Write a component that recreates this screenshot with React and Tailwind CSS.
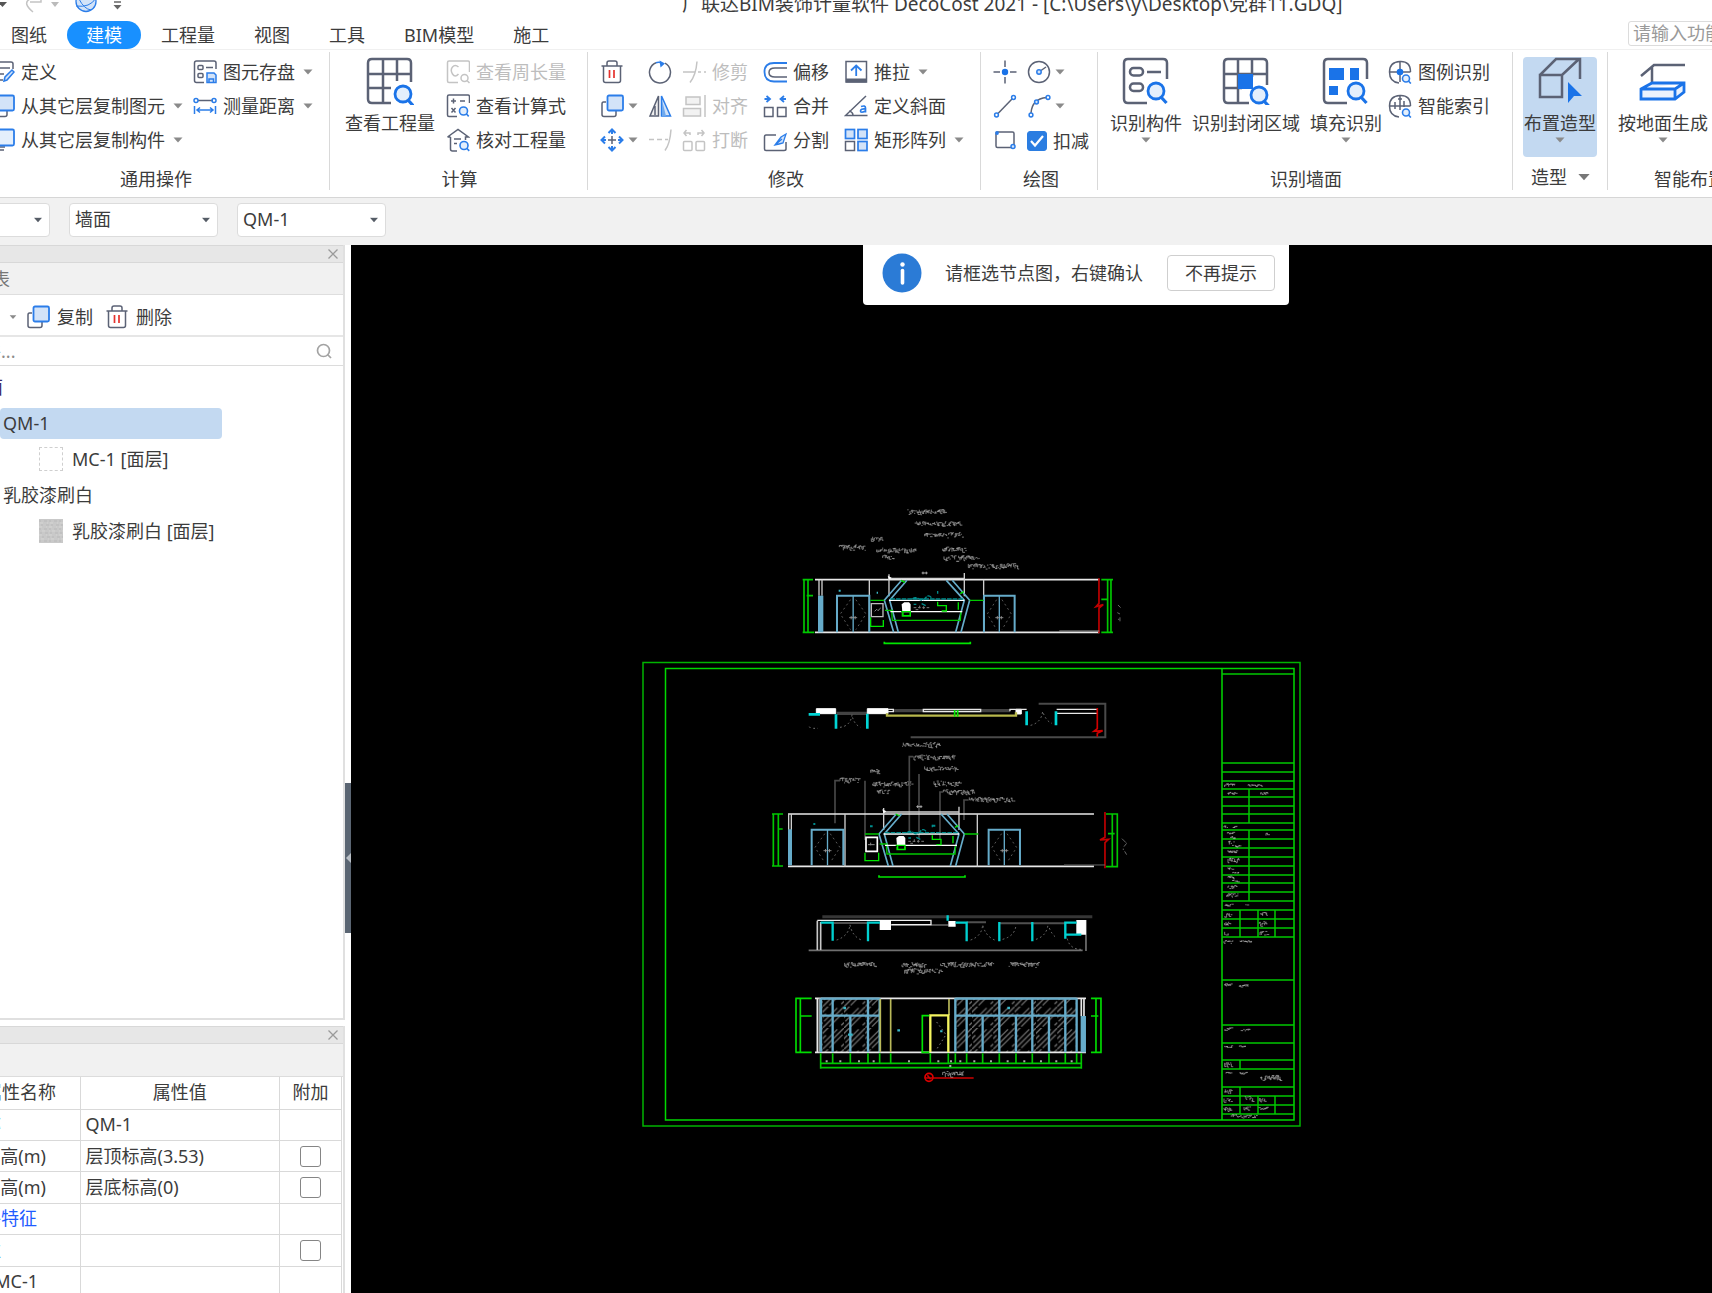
import React from "react";

const DARK = "#5b6275";
const BLUE = "#2b7de9";
const PALE = "#d3e3f8";
const GREY = "#c4c4c4";

function Caret({ className = "text-[#8a8a8a]" }) {
  return (
    <svg viewBox="0 0 10 6" className={`h-[6px] w-[10px] shrink-0 ${className}`} aria-hidden="true">
      <path d="M0.5 0.5H9.5L5 5.5Z" fill="currentColor" />
    </svg>
  );
}

function Icon({ children }) {
  return (
    <svg viewBox="0 0 24 24" className="size-6 shrink-0" fill="none" stroke={DARK} strokeWidth="1.5" aria-hidden="true">
      {children}
    </svg>
  );
}

function BigIcon({ children }) {
  return (
    <svg viewBox="0 0 48 48" className="size-12 shrink-0" fill="none" stroke={DARK} strokeWidth="2.5" aria-hidden="true">
      {children}
    </svg>
  );
}

function Lens({ x, y, r = 4 }) {
  return (
    <g stroke={BLUE} strokeWidth="1.6">
      <circle cx={x} cy={y} r={r} fill="#e4effc" />
      <path d={`M${x + r * 0.7} ${y + r * 0.7}l2.4 2.6`} />
    </g>
  );
}

function BigLens({ x, y }) {
  return (
    <g stroke="#1a73e8" strokeWidth="2.8">
      <circle cx={x} cy={y} r="8" fill="#e4effc" />
      <path d={`M${x + 5} ${y + 6}l5.5 6`} strokeWidth="3.2" />
    </g>
  );
}

const icons = {
  define: (
    <Icon>
      <path d="M2 2H20Q22 2 22 4V9M2 8H19M2 14H13M2 20H12" />
      <path d="M13 21l1-4 7-7 2 2-7 8z" stroke={BLUE} fill={PALE} />
    </Icon>
  ),
  copy: (
    <Icon>
      <path d="M6 8H3.5Q2 8 2 10V20.5Q2 22.500 4 22.500H14Q16 22.500 16 20.500V17" />
      <rect x="7.500" y="1.500" width="15.500" height="15" rx="1.500" stroke={BLUE} fill={PALE} strokeWidth="1.800" />
    </Icon>
  ),
  copyPart: (
    <Icon>
      <path d="M3 19V20M3 22H13M5 19H14" />
      <rect x="7.500" y="1.500" width="15.500" height="16" rx="1.500" stroke={BLUE} fill="#e4effc" strokeWidth="1.800" />
    </Icon>
  ),
  save: (
    <Icon>
      <path d="M11 22.500H3.500Q1.500 22.500 1.500 20.500V3Q1.500 1 3.500 1H21Q23 1 23 3V9" />
      <rect x="5" y="5.500" width="5" height="4" rx="1" />
      <rect x="5" y="13.500" width="5" height="4" rx="1" />
      <path d="M13 7.500H20" />
      <path d="M14 13H21L23 15V22.500H14ZM16 22V19H20.500V22" stroke={BLUE} fill={PALE} />
    </Icon>
  ),
  measure: (
    <Icon>
      <path d="M5 6.500H20" />
      <g stroke={BLUE}>
        <circle cx="3" cy="6.500" r="2" />
        <circle cx="21" cy="6.500" r="2" />
        <path d="M1.500 12V20M22.500 12V20M4 16H20M7 13.500L4 16L7 18.500M17 13.500L20 16L17 18.500" />
      </g>
    </Icon>
  ),
  perimeter: (
    <Icon>
      <g stroke={GREY}>
        <path d="M12 22.500H3Q1.500 22.500 1.500 21V2.500Q1.500 1 3 1H22Q23.500 1 23.500 3V12" />
        <path d="M12.500 7Q9 4 6.500 7T6.500 14T12.500 14" />
        <circle cx="18.500" cy="18" r="3.500" />
        <path d="M21 20.500L23.500 23" />
      </g>
    </Icon>
  ),
  formula: (
    <Icon>
      <path d="M11 22.500H3Q1.500 22.500 1.500 21V2.500Q1.500 1 3 1H22Q23.500 1 23.500 3V9" />
      <path d="M5 7H10M7.500 4.500V9.500M14 7H19M5.500 14L9.500 18.500M9.500 14L5.500 18.500" />
      <Lens x={17.5} y={17} />
    </Icon>
  ),
  verify: (
    <Icon>
      <path d="M1.500 9L12 1.500L22.500 9H19.500V12M4.500 9V21Q4.500 23 6.500 23H11M1.500 9H4.500M8 11H15M8 15.500H11" />
      <Lens x={18} y={17.5} />
    </Icon>
  ),
  trash: (
    <Icon>
      <path d="M1.500 6H22.500M7 5.500V3Q7 1 9 1H15Q17 1 17 3V5.500M3.500 6V20.500Q3.500 22.500 5.500 22.500H18.500Q20.500 22.500 20.500 20.500V6" />
      <path d="M9.500 10V18M14 10V18" stroke="#e5322d" strokeWidth="1.700" />
    </Icon>
  ),
  move: (
    <Icon>
      <path d="M8 12H16M12 8V16" />
      <path d="M8.500 5L12 1.500L15.500 5M8.500 19L12 22.500L15.500 19M5 8.500L1.500 12L5 15.500M19 8.500L22.500 12L19 15.500M12 2V6M12 18V22M2 12H6M18 12H22" stroke={BLUE} strokeWidth="2" />
    </Icon>
  ),
  rotate: (
    <Icon>
      <path d="M17 3.200A10.500 10.500 0 1 1 8 2.700" />
      <path d="M11.500 0.500L17 3.500L12.500 7.500Z" fill={BLUE} stroke="none" />
      <path d="M8 2.700Q10 2 12 2.500" stroke={BLUE} />
    </Icon>
  ),
  mirror: (
    <Icon>
      <path d="M10.500 2V22H2ZM7 12V21" fill="#f0f0f0" />
      <path d="M13.500 2V22H22.500Z" stroke={BLUE} fill={PALE} />
      <path d="M14 6V22H18Z" fill="#6fa9ee" stroke="none" />
    </Icon>
  ),
  extend: (
    <Icon>
      <path d="M1 11.500H6M9 11.500H14M17 11.500H20M23 1.500Q22 16 17 22.500" stroke={GREY} />
    </Icon>
  ),
  trim: (
    <Icon>
      <path d="M1 12H13M16 12H19M22 12H24M15 1.500Q14 15 8 22.500" stroke={GREY} />
    </Icon>
  ),
  align: (
    <Icon>
      <g stroke={GREY} fill="#f2f2f2">
        <rect x="4" y="3" width="14" height="7.500" />
        <rect x="1.500" y="14.500" width="17" height="7.500" />
        <path d="M23 1V23" />
      </g>
    </Icon>
  ),
  breakUp: (
    <Icon>
      <g stroke={GREY}>
        <rect x="1.500" y="13.500" width="8.500" height="9" rx="1" />
        <rect x="14" y="13.500" width="8.500" height="9" rx="1" />
        <path d="M8 7V5H2M4.500 2L2 5L4.500 8M16 7V5H22M19.500 2L22 5L19.500 8" />
      </g>
    </Icon>
  ),
  offset: (
    <Icon>
      <path d="M24 3H11Q1.500 3 1.500 12T11 21.500H24" stroke={BLUE} strokeWidth="1.800" />
      <path d="M24 8H12Q6 8 6 12.500T12 17H24" />
    </Icon>
  ),
  merge: (
    <Icon>
      <rect x="1.500" y="13.500" width="8.500" height="9" />
      <rect x="14.500" y="13.500" width="8.500" height="9" />
      <path d="M1.500 5H6M23 5H18.500M3.500 2L7 5L3.500 8M21 2L17.500 5L21 8" stroke={BLUE} strokeWidth="1.800" />
    </Icon>
  ),
  split: (
    <Icon>
      <path d="M13 7H3Q1.500 7 1.500 9V21Q1.500 22.500 3 22.500H21Q23 22.500 23 21V14" />
      <path d="M12 17L18 9L23 6L20 15L16 16ZM12 17L19 11" stroke={BLUE} fill={PALE} strokeWidth="1.300" />
    </Icon>
  ),
  push: (
    <Icon>
      <path d="M2 1.500H22.500V22H2Z" />
      <path d="M2 20.500H22.500" strokeWidth="4" />
      <path d="M12.200 16V5.500M7 10.500L12.200 5.500L17.500 10.500" stroke={BLUE} strokeWidth="1.800" />
    </Icon>
  ),
  slope: (
    <Icon>
      <path d="M22 2L1.500 21.500H23.500M5 17Q9 18 9 21.500" />
      <path d="M17 12.500Q21.500 11 21.500 14V18.500M21.500 15Q16.500 14.500 16.500 17T21.500 17" stroke={BLUE} strokeWidth="1.700" />
    </Icon>
  ),
  array: (
    <Icon>
      <g stroke={BLUE} fill={PALE} strokeWidth="1.700">
        <rect x="1.500" y="1.500" width="9" height="9" />
        <rect x="14" y="1.500" width="9" height="9" />
        <rect x="14" y="13.500" width="9" height="9" />
      </g>
      <rect x="1.500" y="13.500" width="9" height="9" />
    </Icon>
  ),
  point: (
    <Icon>
      <path d="M12 0.500V7M12 17V23.500M0.500 12H7M17 12H23.500" />
      <circle cx="12" cy="12" r="3.200" fill="#1a73e8" stroke="none" />
    </Icon>
  ),
  circle: (
    <Icon>
      <circle cx="12" cy="12" r="10.500" />
      <path d="M14 10.500L19 7" />
      <circle cx="12" cy="12" r="2.200" stroke={BLUE} fill={PALE} />
    </Icon>
  ),
  line: (
    <Icon>
      <path d="M5 19.500L19 5" />
      <circle cx="3.500" cy="21" r="1.900" stroke={BLUE} />
      <circle cx="20.500" cy="3.500" r="1.900" stroke={BLUE} />
    </Icon>
  ),
  arc: (
    <Icon>
      <path d="M4 19Q5 5 19.500 3.500" />
      <g stroke={BLUE} fill="#ffffff">
        <circle cx="4" cy="21" r="1.900" />
        <circle cx="9.500" cy="8" r="1.900" fill={PALE} />
        <circle cx="21" cy="3.500" r="1.900" />
      </g>
    </Icon>
  ),
  rect: (
    <Icon>
      <rect x="3" y="4" width="18" height="15.500" rx="1.500" />
      <circle cx="4" cy="5" r="1.900" fill={BLUE} stroke="none" />
      <circle cx="20" cy="18.500" r="2" stroke={BLUE} fill={PALE} />
    </Icon>
  ),
  legend: (
    <Icon>
      <path d="M11 23Q1.500 22 1.500 12T12 1.500T22.500 12M12 1.500V22M1.500 12H22.500" />
      <circle cx="12" cy="12" r="3.300" fill="#1a73e8" stroke="none" />
      <Lens x={18} y={18.5} r={3.5} />
    </Icon>
  ),
  smart: (
    <Icon>
      <path d="M11 23Q1.500 22 1.500 12T12 1.500T22.500 12M12 1.500V16M1.500 12H22.500M7 8V15M16 7V13M10 5H14" />
      <Lens x={18} y={18.5} r={3.5} />
    </Icon>
  ),
};

const bigIcons = {
  quantity: (
    <BigIcon>
      <path d="M25 46H6Q2 46 2 42V6Q2 2 6 2H41Q45 2 45 6V25M2 17H45M2 31H25M17 2V46M31 2V24" />
      <BigLens x={37} y={37} />
    </BigIcon>
  ),
  component: (
    <BigIcon>
      <path d="M25 46H6Q2 46 2 42V6Q2 2 6 2H41Q45 2 45 6V22M25 15H39" />
      <rect x="8" y="11" width="13" height="7.500" rx="3.500" />
      <rect x="8" y="26.500" width="13" height="7.500" rx="3.500" />
      <BigLens x={34} y={34} />
    </BigIcon>
  ),
  closed: (
    <BigIcon>
      <path d="M27 46H6Q2 46 2 42V6Q2 2 6 2H41Q45 2 45 6V28M2 17H45M2 31H20M16 2V46M30 2V20" />
      <path d="M16 17H31V32H16Z" fill="#1a73e8" stroke="none" />
      <BigLens x={37} y={38} />
    </BigIcon>
  ),
  fill: (
    <BigIcon>
      <path d="M25 46H6Q2 46 2 42V6Q2 2 6 2H41Q45 2 45 6V22" />
      <path d="M7 11H22V23H7ZM28 11H37V23H28ZM7 29H16V38H7Z" fill="#1a73e8" stroke="none" />
      <BigLens x={34} y={34} />
    </BigIcon>
  ),
  shape: (
    <BigIcon>
      <path d="M4 18H26V40H4ZM4 18L20 2H44V22M26 18L43 2" />
      <path d="M32 25L46 39H38L32 46Z" fill="#1a73e8" stroke="none" />
    </BigIcon>
  ),
  floor: (
    <BigIcon>
      <path d="M46 8H15L2 19M13 9V27" />
      <path d="M2 32L13 26H45V35L36 42H2ZM2 32H36L45 26M36 32V42" stroke="#1a73e8" fill="#eaf2fd" strokeWidth="2.800" />
    </BigIcon>
  ),
};

function Tool({ icon, label, name, caret, disabled }) {
  return (
    <button
      type="button"
      aria-label={label ? undefined : name}
      disabled={disabled}
      className="flex h-[34px] items-center whitespace-nowrap disabled:text-[#bdbdbd]"
    >
      {icons[icon]}
      {label && <span className="ml-1.5">{label}</span>}
      {caret && <span className={label ? "ml-2" : "ml-1"}><Caret /></span>}
    </button>
  );
}

function BigTool({ icon, label, caret, active }) {
  return (
    <button
      type="button"
      className={`mt-[7px] flex h-[100px] flex-col items-center whitespace-nowrap rounded ${active ? "bg-[#c3d9f1] px-px" : ""}`}
    >
      {bigIcons[icon]}
      <span className="mt-[6px] leading-6">{label}</span>
      {caret && <span className="mt-0.5 flex"><Caret /></span>}
    </button>
  );
}

function Col({ children, className = "" }) {
  return <div className={`flex flex-col items-start pt-[5px] ${className}`}>{children}</div>;
}

function Group({ title, titleClass = "pl-2", caret, children, className = "" }) {
  return (
    <section className="flex shrink-0">
      <div className={`flex flex-col ${className}`}>
        <div className="flex h-[117px] items-start">{children}</div>
        <h2 className={`flex items-center justify-center gap-3 whitespace-nowrap leading-6 ${titleClass}`}>
          {title}
          {caret && <Caret className="scale-125 text-[#777]" />}
        </h2>
      </div>
      <div className="mt-0.5 h-[138px] w-px bg-[#d9d9d9]" />
    </section>
  );
}

function Ribbon() {
  return (
    <div className="flex h-[148px] shrink-0 overflow-hidden border-b border-[#d6d6d6] bg-white">
      <Group title="通用操作" className="-ml-[21px] pr-4 pl-3">
        <Col>
          <Tool icon="define" label="定义" />
          <Tool icon="copy" label="从其它层复制图元" caret />
          <Tool icon="copyPart" label="从其它层复制构件" caret />
        </Col>
        <Col className="ml-[10px]">
          <Tool icon="save" label="图元存盘" caret />
          <Tool icon="measure" label="测量距离" caret />
        </Col>
      </Group>
      <Group title="计算" className="pr-[21px] pl-[15px]">
        <BigTool icon="quantity" label="查看工程量" />
        <Col className="ml-[11px]">
          <Tool icon="perimeter" label="查看周长量" disabled />
          <Tool icon="formula" label="查看计算式" />
          <Tool icon="verify" label="核对工程量" />
        </Col>
      </Group>
      <Group title="修改" className="pr-4 pl-3">
        <Col>
          <Tool icon="trash" name="删除" />
          <Tool icon="copy" name="复制" caret />
          <Tool icon="move" name="移动" caret />
        </Col>
        <Col className="ml-[10px]">
          <Tool icon="rotate" name="旋转" />
          <Tool icon="mirror" name="镜像" />
          <Tool icon="extend" name="延伸" disabled />
        </Col>
        <Col className="ml-[10px]">
          <Tool icon="trim" label="修剪" disabled />
          <Tool icon="align" label="对齐" disabled />
          <Tool icon="breakUp" label="打断" disabled />
        </Col>
        <Col className="ml-[15px]">
          <Tool icon="offset" label="偏移" />
          <Tool icon="merge" label="合并" />
          <Tool icon="split" label="分割" />
        </Col>
        <Col className="ml-[15px]">
          <Tool icon="push" label="推拉" caret />
          <Tool icon="slope" label="定义斜面" />
          <Tool icon="array" label="矩形阵列" caret />
        </Col>
      </Group>
      <Group title="绘图" titleClass="pl-0" className="pr-2 pl-3">
        <Col>
          <Tool icon="point" name="点" />
          <Tool icon="line" name="直线" />
          <Tool icon="rect" name="矩形" />
        </Col>
        <Col className="ml-[10px]">
          <Tool icon="circle" name="圆" caret />
          <Tool icon="arc" name="弧" caret />
          <label className="flex h-[34px] items-center gap-1.5 pt-0.5">
            <span className="relative flex size-5">
              <input type="checkbox" defaultChecked className="peer size-5 appearance-none rounded-[3px] border border-[#999] checked:border-[#2b7de1] checked:bg-[#2b7de1]" />
              <svg viewBox="0 0 20 20" className="pointer-events-none absolute inset-0 hidden size-5 peer-checked:block" fill="none" stroke="#fff" strokeWidth="2.200" aria-hidden="true">
                <path d="M4 10L8 14.500L16 5" />
              </svg>
            </span>
            扣减
          </label>
        </Col>
      </Group>
      <Group title="识别墙面" titleClass="pl-3" className="pr-[22px] pl-3">
        <BigTool icon="component" label="识别构件" caret />
        <span className="ml-[10px]"><BigTool icon="closed" label="识别封闭区域" /></span>
        <span className="ml-[10px]"><BigTool icon="fill" label="填充识别" caret /></span>
        <Col className="ml-1.5">
          <Tool icon="legend" label="图例识别" />
          <Tool icon="smart" label="智能索引" />
        </Col>
      </Group>
      <Group title="造型" caret titleClass="-mt-0.5" className="pr-[10px] pl-[10px]">
        <BigTool icon="shape" label="布置造型" caret active />
      </Group>
      <Group title="智能布置" className="pr-12 pl-[10px]" titleClass="pl-9">
        <BigTool icon="floor" label="按地面生成" caret />
      </Group>
    </div>
  );
}

function Combo({ label, value }) {
  return (
    <div className="relative shrink-0">
      <select
        aria-label={label}
        defaultValue={value}
        className="h-[34px] w-[149px] appearance-none rounded border border-[#dcdcdc] bg-white pl-[5px] text-[18px]"
      >
        <option>{value}</option>
      </select>
      <span className="pointer-events-none absolute top-[14px] right-[7px] flex"><Caret className="text-[#555c66] scale-90" /></span>
    </div>
  );
}

function PanelBar() {
  return (
    <div className="flex h-[18px] items-center justify-end border-y border-[#d8d8d8] bg-[#e7e7e7] pr-[5px]">
      <button type="button" aria-label="关闭" className="flex">
        <svg viewBox="0 0 10 10" className="size-[10px]" stroke="#9a9a9a" strokeWidth="1.300" aria-hidden="true">
          <path d="M0.500 0.500L9.500 9.500M9.500 0.500L0.500 9.500" />
        </svg>
      </button>
    </div>
  );
}

function ComponentPanel() {
  return (
    <section className="flex h-[775px] shrink-0 flex-col border-r-2 border-b-2 border-[#e0e0e0] bg-white">
      <PanelBar />
      <div className="h-8 border-b border-[#dedede] bg-[#f1f1f1]">
        <h2 className="-ml-[62px] leading-8 text-[#777]">构件列表</h2>
      </div>
      <div className="flex h-[42px] items-center border-b-2 border-[#e6e6e6] pt-1">
        <span className="ml-2 flex"><Caret className="scale-75 text-[#8a8a8a]" /></span>
        <button type="button" className="ml-2 flex items-center gap-[7px]">{icons.copy}复制</button>
        <button type="button" className="ml-3 flex items-center gap-[7px]">{icons.trash}删除</button>
      </div>
      <div className="flex h-[29px] items-center justify-between border-b border-[#dcdcdc] pr-[11px]">
        <input aria-label="搜索构件" placeholder="搜索构件..." className="-ml-[71px] w-[200px] bg-transparent outline-none placeholder:text-[#8c8c8c]" />
        <svg viewBox="0 0 16 16" className="size-4" fill="none" stroke="#a3a3a3" strokeWidth="1.700" aria-hidden="true">
          <circle cx="7.500" cy="7.500" r="6" />
          <path d="M11.500 11.500L15 15" />
        </svg>
      </div>
      <ul className="flex-1 overflow-hidden pt-[3px]">
        <li className="-ml-[33px] h-9 leading-9 text-[#3b2a66]">墙面</li>
        <li className="flex h-9 items-center">
          <span className="h-[31px] w-[222px] rounded bg-[#c3d9f1] pl-[3px] leading-[31px]">QM-1</span>
        </li>
        <li className="flex h-9 items-center gap-[9px] pl-[39px]">
          <span className="size-6 border border-dashed border-[#cfcfcf]" />
          MC-1 [面层]
        </li>
        <li className="h-9 pl-[3px] leading-9">乳胶漆刷白</li>
        <li className="flex h-9 items-center gap-[9px] pl-[39px]">
          <svg viewBox="0 0 24 24" className="size-6" aria-hidden="true">
            <path d="M0 0H24V24H0Z" fill="#c9c9c9" />
            <g stroke="#b9b9b9" strokeDasharray="2 3 3 2">
              <path d="M0 2H24M2 6H24M0 10H24M1 14H24M3 18H24M0 22H24" />
            </g>
            <g stroke="#d6d6d4" strokeDasharray="3 4 1 2">
              <path d="M1 4H24M0 8H24M3 12H24M0 16H24M2 20H24" />
            </g>
          </svg>
          乳胶漆刷白 [面层]
        </li>
      </ul>
    </section>
  );
}

const props = [
  { name: "名称", pad: "pr-[79px]", tone: "text-[#4aa3ef]", value: "QM-1" },
  { name: "起点顶标高(m)", pad: "pr-[34px]", value: "层顶标高(3.53)", check: true },
  { name: "起点底标高(m)", pad: "pr-[34px]", value: "层底标高(0)", check: true },
  { name: "构件特征", pad: "pr-[43px]", tone: "text-[#1f5cff]", value: "" },
  { name: "备注", pad: "pr-[79px]", tone: "text-[#4aa3ef]", value: "", check: true },
  { name: "MC-1", pad: "pr-[42px]", value: "" },
];

function NameCell({ children, pad, tone = "" }) {
  return (
    <div className={`flex w-[80px] justify-end overflow-hidden ${pad} ${tone}`}>
      <span className="whitespace-nowrap">{children}</span>
    </div>
  );
}

function PropertyPanel() {
  return (
    <section className="mt-[6px] flex shrink-0 flex-col border-r-2 border-[#e0e0e0] bg-white">
      <PanelBar />
      <div className="h-[33px] border-b border-[#dcdcdc] bg-[#f1f1f1]" />
      <table className="mr-px h-[221px] w-[342px] table-fixed border-collapse">
        <colgroup>
          <col className="w-[80px]" />
          <col />
          <col className="w-[62px]" />
        </colgroup>
        <thead>
          <tr className="h-8 border-b border-[#d9d9d9]">
            <th className="border-r border-[#d9d9d9] p-0 font-normal"><NameCell pad="pr-[24px]">属性名称</NameCell></th>
            <th className="border-r border-[#d9d9d9] p-0 font-normal">属性值</th>
            <th className="border-r border-[#d9d9d9] p-0 font-normal">附加</th>
          </tr>
        </thead>
        <tbody>
          {props.map((p) => (
            <tr key={p.name} className="h-[31px] border-b border-[#d9d9d9]">
              <td className="border-r border-[#d9d9d9] p-0"><NameCell pad={p.pad} tone={p.tone}>{p.name}</NameCell></td>
              <td className="border-r border-[#d9d9d9] p-0 pl-[5px]">{p.value}</td>
              <td className="border-r border-[#d9d9d9] p-0">
                {p.check && (
                  <input type="checkbox" aria-label={p.name} className="mx-auto block size-[21px] appearance-none rounded-[3px] border border-[#858585] bg-white" />
                )}
              </td>
            </tr>
          ))}
        </tbody>
      </table>
    </section>
  );
}

const G = "#00c800";
const S = "#66acca";

/* Drafting notes: at this zoom each one is a row of tiny pen marks. */
function Note({ x, y, w, h = 16 }) {
  let d = "";
  let seed = (x * 733 + y * 197 + w) % 233280;
  const next = () => {
    seed = (seed * 9301 + 49297) % 233280;
    return seed / 233280;
  };
  for (let i = 0; i < w; i += 4) {
    const a = y - h / 2 + next() * h * 0.4;
    const b = a + h * (0.3 + next() * 0.4);
    if (next() > 0.35) d += `M${x + i} ${a}V${b}`;
    d += `M${x + i} ${next() > 0.5 ? a : b}h${3 + next() * 5}`;
  }
  return <path d={d} stroke="#b8b8b8" strokeWidth="2" />;
}

function Notes({ list }) {
  return list.map(([x, y, w, h]) => <Note key={`${x}-${y}`} x={x} y={y} w={w} h={h} />);
}

function Door({ x, w, y, b }) {
  const m = x + w / 2;
  return (
    <g>
      <path d={`M${x} ${b}V${y}H${x + w}V${b}`} stroke={S} strokeWidth="6" />
      <path d={`M${m} ${y}V${b}`} stroke={S} strokeWidth="4" />
      <path
        d={`M${m - 8} ${y + 12}L${x + 10} ${(y + b) / 2}L${m - 8} ${b - 8}M${m + 8} ${y + 12}L${x + w - 10} ${(y + b) / 2}L${m + 8} ${b - 8}`}
        stroke="#6a6a6a" strokeWidth="2.500" strokeDasharray="6 9"
      />
      <path d={`M${m - 12} ${b - 44}h24M${m - 6} ${b - 49}v10M${m + 6} ${b - 49}v10`} stroke="#9a9a9a" strokeWidth="2.500" />
    </g>
  );
}

/* Reception wall between the two slanted columns; x, y is the ceiling's left end. */
function Reception({ x, y }) {
  return (
    <g transform={`translate(${x} ${y})`}>
      <path d="M0 -16V50M226 -20V50M0 -4H226" stroke="#cfcfcf" strokeWidth="4" />
      <path d="M-4 -12L8 -6L0 0" fill="#fff" stroke="none" />
      <path d="M38 2L-14 62L14 158M54 2L2 62L28 158M172 2L226 62L200 158M190 2L242 62L216 158" stroke={S} strokeWidth="5" />
      <path d="M-56 62H-14M242 62H284M8 95L10 122H214L216 95M40 100V109H64V100M-12 92H12" stroke={G} strokeWidth="4" />
      <path d="M0 62H226M4 96H220" stroke="#fff" strokeWidth="4" />
      <path d="M4 58H222M70 58q10-8 20 0t20-4t20 4M146 34v8M74 74h8M98 72l12 6" stroke="#008c8c" strokeWidth="4" strokeDasharray="14 3" />
      <path d="M38 74L46 68H60L65 74V96H40Z" fill="#fff" stroke="none" />
      <path d="M36 96H66M42 96V108H64V96M146 66V78H172V94M158 94H174M208 68V90M214 42L224 36M36 2L48 8" stroke="#00e600" strokeWidth="4" />
      <path d="M74 84h50M80 90h12M92 78v12M104 80v10" stroke="#7a7a7a" strokeWidth="3" strokeDasharray="8 5" />
      <path d="M98 -20h18M102 -24v8M112 -24v8" stroke="#aaa" strokeWidth="3" />
      <path d="M-14 186V191H244V186" stroke="#00e600" strokeWidth="5" />
    </g>
  );
}

function ElevationUpper() {
  return (
    <g transform="translate(780 490) scale(0.3333)">
      <Notes list={[[382, 66, 116], [404, 102, 138], [434, 135, 114], [274, 147, 36], [178, 173, 78], [290, 182, 118], [308, 203, 34], [488, 179, 70], [492, 205, 106], [565, 229, 152]]} />
      <path d="M72 427V269M84 269V427M68 269H99M80 317H99M68 427H103" stroke={G} strokeWidth="5" />
      <path d="M964 269H999M964 328H984M964 427H999M983 269V427M993 269V427" stroke={G} strokeWidth="5" />
      <path d="M105 269H958M105 427H958" stroke="#e8e8e8" strokeWidth="5" />
      <path d="M117 269V317M126 269V317M268 269V427M611 269V427" stroke="#cfcfcf" strokeWidth="4" />
      <path d="M114 317H130V427H114Z" fill={S} stroke="none" />
      <Door x={171} w={97} y={317} b={427} />
      <Door x={612} w={92} y={317} b={427} />
      <path d="M274 341H309V380H274Z" stroke="#bdbdbd" strokeWidth="4" />
      <path d="M284 364l6-6 4 4 8-8" stroke="#888" strokeWidth="3" />
      <path d="M272 382V409H310V390" stroke="#00e600" strokeWidth="4" />
      <Reception x={327} y={269} />
      <path d="M957 265V340L948 350L970 344L957 354V430" stroke="#c00000" strokeWidth="5" />
      <path d="M838 423H958" stroke="#999" strokeWidth="3" />
      <path d="M176 302h6M290 308h4" stroke="#39b8c8" strokeWidth="6" />
      <path d="M1014 345l8 8M1012 368l8 4M1020 382v12M1014 388h4" stroke="#666" strokeWidth="3" />
    </g>
  );
}

function PlanAndElevationMiddle() {
  return (
    <g transform="translate(780 680) scale(0.3333)">
      <path d="M776 71H976V172H392" stroke="#4a4a4a" strokeWidth="6" />
      <path d="M340 92H690M170 100H262" stroke="#606060" strokeWidth="10" opacity="0.7" />
      <path d="M109 86H167V101H109ZM262 86H324V101H262ZM708 88H724V102H708Z" fill="#fff" stroke="#fff" strokeWidth="3" />
      <path d="M430 88H602V95H430ZM830 88H952M830 100H952M324 88H340V95H324M690 94V88H740" stroke="#e8e8e8" strokeWidth="4" />
      <path d="M321 100V107H708V97" stroke="#b8b84c" strokeWidth="7" />
      <path d="M524 90V110M533 90V110" stroke="#00e600" strokeWidth="5" />
      <path d="M86 103H120M168 103V146M262 101V146M740 94V136M828 94V136" stroke="#00d5d5" strokeWidth="8" />
      <path d="M180 142Q212 138 216 104Q220 132 242 142M752 136Q784 128 788 94Q798 124 816 130M88 140L96 150M100 145H114" stroke="#777" strokeWidth="3" strokeDasharray="5 8" />
      <path d="M952 84V146L942 154L968 152L952 160V170" stroke="#d00000" strokeWidth="5" />
      <Notes list={[[366, 196, 114], [402, 233, 122], [434, 267, 100], [272, 277, 26], [180, 302, 60], [278, 313, 118], [292, 334, 34], [462, 311, 80], [490, 337, 94], [568, 360, 134]]} />
      <path d="M388 460V230H400M417 282V476M165 430V302H180M255 302V480M480 480V336H490M552 420V360H566" stroke="#484848" strokeWidth="5" />
      <path d="M-20 402V560M-5 402V560M-24 402H9M-5 447H8M-24 558H9" stroke={G} strokeWidth="5" />
      <path d="M978 402H1012V560H978M997 402V560M984 461H1004" stroke={G} strokeWidth="5" />
      <path d="M24 402H942M24 559H942" stroke="#e8e8e8" strokeWidth="5" />
      <path d="M26 402V450M34 402V450M195 402V560M592 402V560" stroke="#cfcfcf" strokeWidth="4" />
      <path d="M24 448H36V556H24Z" fill={S} stroke="none" />
      <Door x={95} w={95} y={449} b={556} />
      <Door x={626} w={94} y={449} b={556} />
      <path d="M258 472H292V514H258Z" stroke="#fff" strokeWidth="5" />
      <path d="M264 494h20M272 488v8" stroke="#888" strokeWidth="3" />
      <path d="M255 518V542H296V518" stroke="#00e600" strokeWidth="4" />
      <Reception x={311} y={400} />
      <path d="M975 396V472L960 480L986 478L975 488V565" stroke="#c00000" strokeWidth="5" />
      <path d="M852 555H975" stroke="#666" strokeWidth="3" />
      <path d="M100 432h6M270 439h8M458 437h8" stroke="#008c8c" strokeWidth="6" />
      <path d="M1026 476l12 12M1040 490l-8 10M1034 514l6 10M1030 506v4" stroke="#666" strokeWidth="3" />
    </g>
  );
}

function ElevationLower() {
  return (
    <g transform="translate(780 900) scale(0.3333)">
      <path d="M127 50H937" stroke="#363636" strokeWidth="9" />
      <path d="M86 151H908M918 60V153" stroke="#707070" strokeWidth="5" />
      <path d="M112 62V150M122 66V150" stroke="#c8c8c8" strokeWidth="5" />
      <path d="M160 69H262M330 75H505M560 67H618M660 70H856" stroke="#505050" strokeWidth="6" />
      <path d="M112 61H453V74H334" stroke="#eee" strokeWidth="4" />
      <path d="M299 60H333V90H299ZM505 63H527V80H505ZM889 60H918V104H889Z" fill="#fff" stroke="none" />
      <path d="M122 68H158V122M300 68H264V124M503 46V62M527 68H560V124M658 66V124M757 66V124M890 68H856V116M858 104H904" stroke="#00d0d0" strokeWidth="7" />
      <path d="M170 120Q206 108 210 74Q216 108 244 120M572 120Q606 108 608 74Q616 108 644 120M668 118Q706 108 708 74M768 118Q800 108 804 74M808 84Q816 104 828 112M862 116Q870 150 908 148" stroke="#777" strokeWidth="3" strokeDasharray="5 8" />
      <Notes list={[[194, 195, 94], [366, 196, 72], [374, 213, 112], [482, 195, 158], [686, 195, 92]]} />
      <path d="M123 296H299V457H123ZM526 296H890V457H526Z" fill="url(#glass)" stroke="none" />
      <path d="M105 295H918M105 457H918M112 295V457M904 295V348M912 295V348" stroke="#e8e8e8" strokeWidth="5" />
      <path d="M118 295V457" stroke="#999" strokeWidth="5" />
      <path d="M123 295V457M158 295V457M264 295V457M299 295V457M123 296H299M123 347H299M211 347V457M526 295V457M560 295V457M658 295V457M757 295V457M856 295V457M890 295V457M526 296H890M526 347H890M608 347V457M708 347V457M807 347V457" stroke={S} strokeWidth="7" />
      <path d="M902 348H918V457H902Z" fill={S} stroke="none" />
      <path d="M301 297V457M332 297V457M507 297V346" stroke="#b9b95a" strokeWidth="5" />
      <path d="M451 457V346H505V457" stroke="#f5f560" strokeWidth="7" />
      <path d="M470 366L498 404L470 448" stroke="#777" strokeWidth="3" strokeDasharray="5 8" />
      <path d="M427 457V347H448M424 457H448" stroke="#00e600" strokeWidth="5" />
      <path d="M48 295V457M61 295V457M46 295H95M61 348H95M46 457H95M933 295H963V457H933M948 295V457M933 348H955" stroke="#00dc00" strokeWidth="5" />
      <path d="M122 460V506M904 460V506M120 490H904M120 503H904M158 460V490M211 460V490M264 460V490M299 460V490M332 460V490M451 460V490M505 460V490M526 460V490M560 460V490M608 460V490M658 460V490M708 460V490M757 460V490M807 460V490M856 460V490M890 460V490" stroke={G} strokeWidth="5" />
      <path d="M137 484h6M178 484h6M234 484h6M278 484h6M384 484h6M472 484h6M510 484h6M538 484h6M580 484h6M630 484h6M680 484h6M730 484h6M780 484h6M826 484h6M872 484h6M508 498h6" stroke="#aaa" strokeWidth="6" />
      <path d="M190 324h8M352 391h8M682 324h8M484 391v6M204 404h14" stroke="#39b8c8" strokeWidth="7" />
      <circle cx="447" cy="532" r="12" stroke="#e00000" strokeWidth="5" />
      <path d="M434 534H581M442 526l10 12" stroke="#d00000" strokeWidth="5" />
      <Note x={488} y={523} w={62} h={18} />
    </g>
  );
}

const blockLines = [674, 763, 772, 781, 789, 797, 806, 814, 823, 830, 839, 848, 857, 866, 875, 883, 892, 901, 910, 919, 928, 937, 980, 1025, 1043, 1060, 1069, 1087, 1096, 1105, 1114];

function TitleBlock() {
  return (
    <g stroke={G} strokeWidth="1.5">
      <path d={blockLines.map((y) => `M1222 ${y}H1294`).join("")} />
      <path d="M1249 789V823M1249 830V901M1240 910V937M1258 910V937M1275 910V937M1240 1060V1069M1240 1087V1114M1258 1096V1114M1275 1096V1114" />
      <g transform="translate(1200 650) scale(0.3333)">
        <Notes list={[[74, 406, 30, 9], [144, 407, 42, 6], [82, 431, 26, 9], [182, 431, 24, 9], [72, 530, 10, 9], [98, 532, 10, 6], [82, 551, 20, 9], [92, 563, 14, 6], [198, 555, 8, 14], [84, 580, 18, 14], [106, 589, 16, 8], [84, 606, 28, 12], [84, 632, 34, 18], [84, 655, 16, 9], [98, 668, 20, 5], [84, 682, 18, 9], [96, 693, 18, 7], [84, 711, 26, 12]]} />
      </g>
      <g transform="translate(1200 890) scale(0.3333)">
        <Notes list={[[80, 18, 34, 14], [74, 46, 22, 9], [136, 46, 6, 5], [72, 77, 22, 16], [74, 101, 18, 14], [74, 130, 12, 14], [180, 75, 22, 16], [178, 102, 24, 14], [180, 130, 22, 16], [72, 155, 26, 9], [120, 155, 34, 6], [72, 286, 24, 10], [118, 288, 28, 8], [72, 418, 24, 9], [122, 420, 26, 6], [74, 471, 22, 8], [118, 470, 20, 6], [74, 524, 22, 18], [78, 551, 14, 8], [118, 550, 22, 6], [180, 565, 62, 18], [72, 606, 24, 16], [72, 630, 22, 18], [134, 628, 26, 16], [178, 629, 20, 12], [72, 657, 22, 16], [132, 657, 18, 12], [176, 656, 28, 10], [92, 679, 78, 10]]} />
      </g>
    </g>
  );
}

function Drawing() {
  return (
    <svg viewBox="351 245 1361 1048" preserveAspectRatio="xMinYMin slice" className="block h-full w-full" fill="none" role="img" aria-label="墙面立面图">
      <defs>
        <pattern id="glass" width="64" height="64" patternUnits="userSpaceOnUse">
          <path d="M-2 66L66 -2M4 44L44 4M56 56L64 48M-2 18L18 -2M20 60L60 20M-2 34L10 22" stroke="#707070" strokeWidth="4" />
        </pattern>
      </defs>
      <path d="M643 662.500H1300V1126H643Z" stroke="#00b400" strokeWidth="1.500" />
      <path d="M665.500 668.500H1294V1120H665.500ZM1222 668V1120" stroke="#00d800" strokeWidth="1.500" />
      <TitleBlock />
      <ElevationUpper />
      <PlanAndElevationMiddle />
      <ElevationLower />
    </svg>
  );
}

function Prompt() {
  return (
    <div role="status" className="absolute top-0 left-[512px] flex h-[60px] w-max items-center rounded-b bg-white pr-[14px] pb-1 pl-[19px]">
      <svg viewBox="0 0 40 40" className="size-10" aria-hidden="true">
        <circle cx="20" cy="20" r="19.500" fill="#2b7bd6" />
        <path d="M20.500 17.500V30" stroke="#fff" strokeWidth="3.600" strokeLinecap="round" />
        <circle cx="20.500" cy="11.500" r="2.200" fill="#fff" />
      </svg>
      <p className="ml-[23px] whitespace-nowrap">请框选节点图，右键确认</p>
      <button type="button" className="ml-6 h-9 rounded border border-[#cfcfcf] px-[17px]">不再提示</button>
    </div>
  );
}

const tabs = ["图纸", "建模", "工程量", "视图", "工具", "BIM模型", "施工"];

export default function App() {
  return (
    <div className="flex h-screen flex-col overflow-hidden bg-white font-['Noto_Sans','Noto_Sans_CJK_SC',sans-serif] text-[18px] text-[#3c3c3c]">
      <header className="shrink-0 overflow-hidden border-b border-[#f0f0f0]">
        <div className="-mt-[9px] flex h-[27px] items-center">
          <svg viewBox="0 0 126 27" className="h-[27px] w-[126px] shrink-0" fill="none" aria-hidden="true">
            <path d="M-2 11H7L2.500 16Z" fill="#555" />
            <path d="M33 21Q22 12 30 8M30 11H41V6" stroke="#c4c4c4" strokeWidth="1.500" />
            <path d="M51 11H59L55 16Z" fill="#bbb" />
            <circle cx="86" cy="10.500" r="10" fill={PALE} stroke={BLUE} strokeWidth="1.300" />
            <path d="M76 15Q90 17 96 7M79 8Q84 18 91 19" stroke={BLUE} strokeWidth="1" />
            <path d="M114 11H121" stroke="#666" strokeWidth="1.500" />
            <path d="M113.500 14H121.500L117.500 18.500Z" fill="#666" />
          </svg>
          <h1 className="ml-[556px] text-[19px] whitespace-nowrap">广联达BIM装饰计量软件 DecoCost 2021 - [C:\Users\y\Desktop\党群11.GDQ]</h1>
        </div>
        <nav className="-ml-2 flex h-[31px] items-end gap-px">
          {tabs.map((t) => (
            <button
              key={t}
              type="button"
              className={`h-7 rounded-full px-[19px] whitespace-nowrap ${t === "建模" ? "bg-[#1890ff] text-white" : ""}`}
            >
              {t}
            </button>
          ))}
          <input
            type="search"
            aria-label="搜索功能"
            placeholder="请输入功能名称"
            className="-mr-[76px] mb-[3px] ml-auto h-[25px] w-[160px] rounded-[3px] border border-[#dcdcdc] px-1 placeholder:text-[#9a9a9a]"
          />
        </nav>
      </header>
      <Ribbon />
      <div className="flex h-[47px] shrink-0 items-center gap-[19px] bg-[#f1f1f1] pb-1">
        <div className="-ml-[99px]"><Combo label="楼层" value="首层" /></div>
        <Combo label="构件类型" value="墙面" />
        <Combo label="构件" value="QM-1" />
      </div>
      <main className="flex min-h-0 flex-1">
        <aside className="flex w-[345px] shrink-0 flex-col overflow-hidden">
          <ComponentPanel />
          <PropertyPanel />
        </aside>
        <div className="flex w-[6px] shrink-0 flex-col pt-[538px]">
          <button type="button" aria-label="折叠面板" className="flex h-[150px] items-center bg-[#5b6673]">
            <svg viewBox="0 0 6 10" className="h-[10px] w-[6px]" aria-hidden="true">
              <path d="M6 0V10L1 5Z" fill="#b9bfc6" />
            </svg>
          </button>
        </div>
        <div className="relative min-w-0 flex-1 bg-black">
          <Drawing />
          <Prompt />
        </div>
      </main>
    </div>
  );
}
